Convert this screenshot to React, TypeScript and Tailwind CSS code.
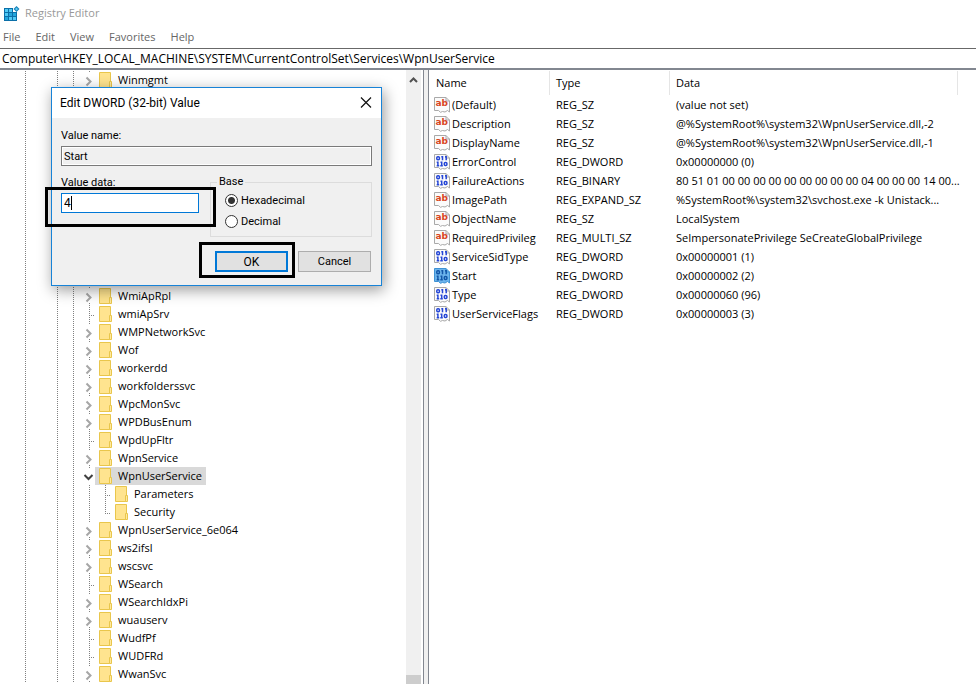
import React, { useState } from 'react';

type NodeKind = 'closed' | 'open' | 'leaf' | 'last';

interface TreeKey {
  name: string;
  kind: NodeKind;
  nested?: boolean;
  selected?: boolean;
}

interface RegistryValue {
  name: string;
  type: string;
  data: string;
  selected?: boolean;
}

const lowerKeys: TreeKey[] = [
  { name: 'WmiApRpl', kind: 'closed' },
  { name: 'wmiApSrv', kind: 'leaf' },
  { name: 'WMPNetworkSvc', kind: 'closed' },
  { name: 'Wof', kind: 'closed' },
  { name: 'workerdd', kind: 'closed' },
  { name: 'workfolderssvc', kind: 'closed' },
  { name: 'WpcMonSvc', kind: 'closed' },
  { name: 'WPDBusEnum', kind: 'closed' },
  { name: 'WpdUpFltr', kind: 'leaf' },
  { name: 'WpnService', kind: 'closed' },
  { name: 'WpnUserService', kind: 'open', selected: true },
  { name: 'Parameters', kind: 'leaf', nested: true },
  { name: 'Security', kind: 'last', nested: true },
  { name: 'WpnUserService_6e064', kind: 'closed' },
  { name: 'ws2ifsl', kind: 'closed' },
  { name: 'wscsvc', kind: 'closed' },
  { name: 'WSearch', kind: 'leaf' },
  { name: 'WSearchIdxPi', kind: 'closed' },
  { name: 'wuauserv', kind: 'closed' },
  { name: 'WudfPf', kind: 'leaf' },
  { name: 'WUDFRd', kind: 'leaf' },
  { name: 'WwanSvc', kind: 'closed' },
];

const values: RegistryValue[] = [
  { name: '(Default)', type: 'REG_SZ', data: '(value not set)' },
  { name: 'Description', type: 'REG_SZ', data: '@%SystemRoot%\\system32\\WpnUserService.dll,-2' },
  { name: 'DisplayName', type: 'REG_SZ', data: '@%SystemRoot%\\system32\\WpnUserService.dll,-1' },
  { name: 'ErrorControl', type: 'REG_DWORD', data: '0x00000000 (0)' },
  { name: 'FailureActions', type: 'REG_BINARY', data: '80 51 01 00 00 00 00 00 00 00 00 00 04 00 00 00 14 00...' },
  { name: 'ImagePath', type: 'REG_EXPAND_SZ', data: '%SystemRoot%\\system32\\svchost.exe -k Unistack...' },
  { name: 'ObjectName', type: 'REG_SZ', data: 'LocalSystem' },
  { name: 'RequiredPrivileg', type: 'REG_MULTI_SZ', data: 'SeImpersonatePrivilege SeCreateGlobalPrivilege' },
  { name: 'ServiceSidType', type: 'REG_DWORD', data: '0x00000001 (1)' },
  { name: 'Start', type: 'REG_DWORD', data: '0x00000002 (2)', selected: true },
  { name: 'Type', type: 'REG_DWORD', data: '0x00000060 (96)' },
  { name: 'UserServiceFlags', type: 'REG_DWORD', data: '0x00000003 (3)' },
];

const RegeditLogo = () => (
  <svg width="16" height="16" viewBox="0 0 16 16" shapeRendering="crispEdges" aria-hidden="true">
    <path d="M0 2h9v4h4v9H0z" fill="#0b6fa8" />
    <path d="M1 3h3v3H1zM5 3h3v3H5zM1 7h3v3H1zM5 11h3v3H5zM9 11h3v3H9z" fill="#4fc9f5" />
    <path d="M5 7h3v3H5zM9 7h3v3H9zM1 11h3v3H1z" fill="#22a5dc" />
    <path d="M12.500 0l3 3-3 3-3-3z" fill="#1580b8" shapeRendering="auto" />
    <path d="M12.500 1.500l1.500 1.500-1.500 1.500-1.500-1.500z" fill="#5ccbf2" shapeRendering="auto" />
  </svg>
);

const FolderIcon = () => (
  <svg width="13" height="16" viewBox="0 0 13 16" className="shrink-0" aria-hidden="true">
    <path d="M.5.500h11v15H.5z" fill="#ffe48f" stroke="#e9c64c" />
    <path d="M10.500 9.500h2v6h-2z" fill="#ffe99f" stroke="#e9c64c" />
  </svg>
);

const ValueIcon = ({ binary, selected }: { binary: boolean; selected?: boolean }) => (
  <svg width="16" height="16" viewBox="0 0 16 16" className="shrink-0" aria-hidden="true">
    <path
      d="M.5.500h11.500l3.500 3.500v11l-2-1.500-2.500 1.500-2.500-.5-2 .8-2-1.800H.5z"
      fill={selected ? '#6cb4ec' : '#fbfbfb'}
      stroke={selected ? '#3f92d4' : '#a9a9a9'}
    />
    <path d="M12 .5v3.500h3.500" fill="none" stroke={selected ? '#3f92d4' : '#a9a9a9'} />
    {binary ? (
      <g fill="none" stroke={selected ? '#1256a8' : '#2546d6'} strokeWidth="1.500">
        <rect x="2.800" y="2.800" width="2.600" height="3" rx="1" />
        <path d="M7.300 2.700h1.200v3.500M11 2.700h1.200v3.500" />
        <path d="M2.700 8.200h1.200v3.600M2.700 11.800h2.500M6.500 8.200h1.200v3.600M6.300 11.800h2.500" />
        <rect x="10.300" y="8.500" width="2.600" height="3" rx="1" />
      </g>
    ) : (
      <text x="1.500" y="9" fill="#d8451f" className="font-['DejaVu_Sans',sans-serif] text-[9px] font-bold">
        ab
      </text>
    )}
  </svg>
);

const Toggle = ({ kind }: { kind: NodeKind }) => (
  <svg width="13" height="18" viewBox="0 0 13 18" className="shrink-0" aria-hidden="true">
    {kind === 'closed' && (
      <>
        <path d="M7.500 0v1M7.500 16v1" stroke="#808080" />
        <path d="M4.500 6.500l4 4-4 4" fill="none" stroke="#a6a6a6" strokeWidth="2" />
      </>
    )}
    {kind === 'open' && (
      <>
        <path d="M7.500 0v1" stroke="#808080" />
        <path d="M2.500 8l4 4 4-4" fill="none" stroke="#404040" strokeWidth="2" />
      </>
    )}
    {kind === 'leaf' && <path d="M7.500 0v18M9 10.500h5" stroke="#808080" strokeDasharray="1 1" />}
    {kind === 'last' && <path d="M7.500 0v11M9 10.500h5" stroke="#808080" strokeDasharray="1 1" />}
  </svg>
);

const Guide = ({ className }: { className: string }) => (
  <span className={`h-full shrink-0 ${className}`}>
    <span className="block h-full w-px bg-[repeating-linear-gradient(to_bottom,#808080_0_1px,transparent_1px_2px)]"></span>
  </span>
);

const TreeRow = ({ item }: { item: TreeKey }) => (
  <li className="flex h-[18px] pl-[25px]">
    <Guide className="w-8" />
    <Guide className="w-4" />
    {item.nested && <Guide className="w-4" />}
    <Guide className="w-[9px]" />
    <Toggle kind={item.kind} />
    <span className={`flex items-center gap-1.5 px-1 ${item.selected ? 'bg-[#d9d9d9]' : ''}`}>
      <FolderIcon />
      <span className="whitespace-nowrap">{item.name}</span>
    </span>
  </li>
);

const EditDialog = () => {
  const [data, setData] = useState('4');
  const [base, setBase] = useState('hex');

  const radioClass =
    'size-[13px] shrink-0 appearance-none rounded-full border border-[#333] bg-white checked:bg-[radial-gradient(circle,#333_0_3px,#fff_4px)]';

  return (
    <div
      role="dialog"
      aria-label="Edit DWORD (32-bit) Value"
      className="absolute top-[87px] left-[51px] w-[331px] border border-[#1883d7] bg-[#f0f0f0] font-['Roboto',sans-serif] shadow-[2px_4px_14px_rgba(0,0,0,0.4)]"
    >
      <div className="flex h-[30px] items-center justify-between bg-white pr-[9px] pl-2">
        <h2 className="text-xs">Edit DWORD (32-bit) Value</h2>
        <button type="button" aria-label="Close" className="size-3">
          <svg width="12" height="12" viewBox="0 0 12 12">
            <path d="M1 .5l10 10M11 .5l-10 10" stroke="#111" strokeWidth="1.200" />
          </svg>
        </button>
      </div>

      <form className="px-[9px] pt-2 pb-[13px]" onSubmit={(e) => e.preventDefault()}>
        <label htmlFor="value-name" className="block h-5 leading-5">Value name:</label>
        <input
          id="value-name"
          readOnly
          value="Start"
          className="block h-5 w-full border border-[#7a7a7a] bg-[#f0f0f0] px-0.5 shadow-[inset_0_0_0_1px_#fff]"
        />

        <div className="mt-[7px] flex gap-[11px]">
          <div className="w-[138px]">
            <label htmlFor="value-data" className="block h-5 leading-5">Value data:</label>
            <div className="flex h-5 items-center border border-[#0078d7] bg-white px-0.5">
              <input
                id="value-data"
                value={data}
                onChange={(e) => setData(e.target.value)}
                className="w-[7px] text-xs outline-none"
              />
              <span className="h-[14px] w-px bg-black"></span>
            </div>
          </div>

          <fieldset className="mt-px h-[63px] flex-1 border border-[#dcdcdc] px-3.5">
            <legend className="-ml-2 px-0.5 leading-4">Base</legend>
            <label className="flex h-[21px] items-center gap-[3px] leading-5">
              <input type="radio" name="base" className={radioClass} checked={base === 'hex'} onChange={() => setBase('hex')} />
              Hexadecimal
            </label>
            <label className="flex h-[21px] items-center gap-[3px] leading-5">
              <input type="radio" name="base" className={radioClass} checked={base === 'dec'} onChange={() => setBase('dec')} />
              Decimal
            </label>
          </fieldset>
        </div>

        <div className="mt-3.5 flex justify-end gap-2.5 pr-px">
          <button type="submit" className="h-[21px] w-[73px] border-2 border-[#0078d7] bg-[#e1e1e1] text-xs leading-4">OK</button>
          <button type="button" className="h-[21px] w-[73px] border border-[#adadad] bg-[#e1e1e1] leading-5">Cancel</button>
        </div>
      </form>

      {/* step markers */}
      <div className="pointer-events-none absolute top-[99px] -left-[7px] h-10 w-[171px] border-3 border-black"></div>
      <div className="pointer-events-none absolute top-[154px] left-[147px] h-9 w-24 border-3 border-black"></div>
    </div>
  );
};

const App: React.FC = () => {
  return (
    <div className="relative flex h-screen flex-col overflow-hidden bg-white font-['Open_Sans',sans-serif] text-[11px] text-black">
      <header className="flex h-[27px] items-center gap-[5px] pl-1">
        <RegeditLogo />
        <h1 className="text-[#999]">Registry Editor</h1>
      </header>

      <nav className="flex h-[21px] items-center gap-[15px] pl-[3px] text-[#666]">
        <button type="button">File</button>
        <button type="button">Edit</button>
        <button type="button">View</button>
        <button type="button">Favorites</button>
        <button type="button">Help</button>
      </nav>

      <div className="h-[22px] border-t border-b-2 border-t-[#686868] border-b-[#828790]">
        <input
          aria-label="Address"
          className="block h-[19px] w-full px-0.5 text-xs outline-none"
          defaultValue="Computer\HKEY_LOCAL_MACHINE\SYSTEM\CurrentControlSet\Services\WpnUserService"
        />
      </div>

      <div className="flex min-h-0 flex-1">
        <div className="flex w-[424px] shrink-0 border-r border-[#828790]">
          <ul className="min-w-0 flex-1 pt-px">
            <TreeRow item={{ name: 'Winmgmt', kind: 'closed' }} />
            {/* keys covered by the dialog */}
            <li className="flex h-[198px] pl-[25px]">
              <Guide className="w-8" />
              <Guide className="w-4" />
              <Guide className="w-4" />
            </li>
            {lowerKeys.map((item) => (
              <TreeRow key={item.name} item={item} />
            ))}
          </ul>
          <div className="mr-0.5 flex w-[15px] flex-col items-center bg-[#f0f0f0]">
            <svg width="15" height="17" viewBox="0 0 15 17" aria-hidden="true">
              <path d="M4 12l3.500-3.500L11 12" fill="none" stroke="#505050" strokeWidth="2" />
            </svg>
            <div className="mt-auto h-[9px] w-full bg-[#cdcdcd]"></div>
          </div>
        </div>

        <div className="w-1 shrink-0 bg-[#f0f0f0]"></div>

        <div className="min-w-0 flex-1 overflow-hidden border-l border-[#828790] pt-px">
          <table className="w-full table-fixed border-separate border-spacing-0 text-left whitespace-nowrap">
            <colgroup>
              <col className="w-[121px]" />
              <col className="w-[120px]" />
              <col className="w-[288px]" />
              <col />
            </colgroup>
            <thead>
              <tr className="h-6">
                <th className="border-r border-[#e5e5e5] pl-[7px] font-normal">Name</th>
                <th className="border-r border-[#e5e5e5] pl-1.5 font-normal">Type</th>
                <th className="border-r border-[#e5e5e5] pl-1.5 font-normal">Data</th>
                <th></th>
              </tr>
            </thead>
            <tbody>
              {values.map((v) => (
                <tr key={v.name} className="h-[19px] leading-[19px]">
                  <td className="pl-[5px]">
                    <span className="flex items-center gap-0.5">
                      <ValueIcon binary={v.type === 'REG_DWORD' || v.type === 'REG_BINARY'} selected={v.selected} />
                      {v.name}
                    </span>
                  </td>
                  <td className="pl-1.5">{v.type}</td>
                  <td className="pl-1.5">{v.data}</td>
                  <td></td>
                </tr>
              ))}
            </tbody>
          </table>
        </div>
      </div>

      <EditDialog />
    </div>
  );
};

export default App;
